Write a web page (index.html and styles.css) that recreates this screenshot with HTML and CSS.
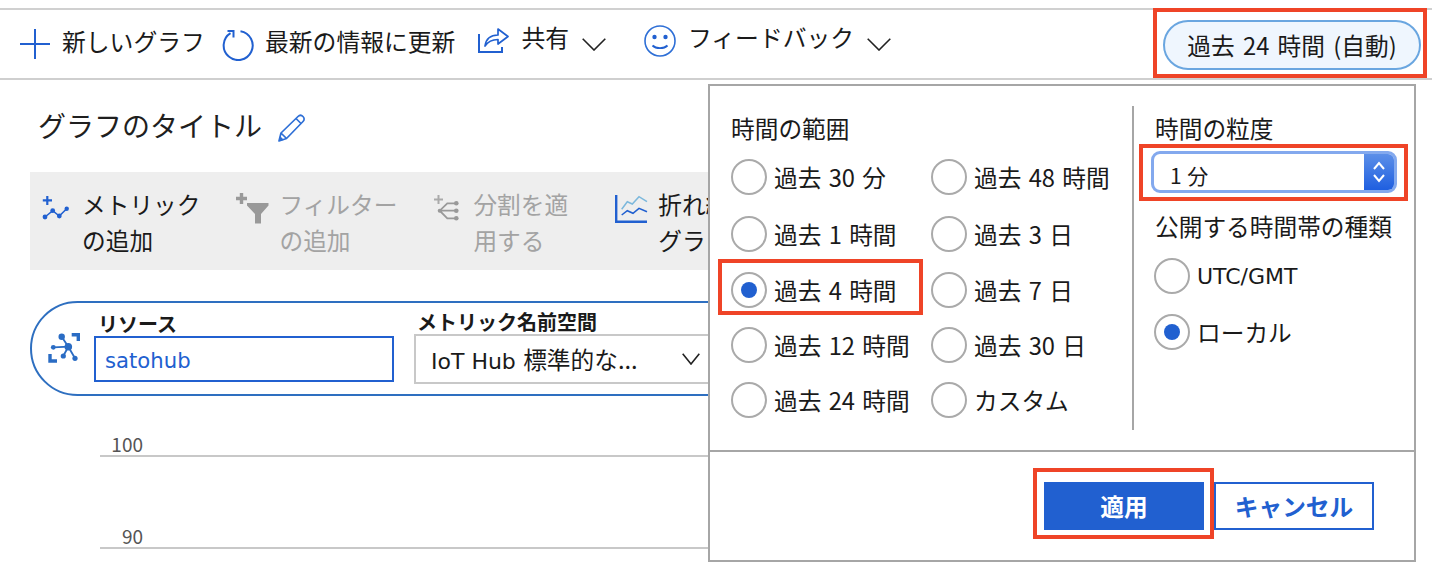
FILE: index.html
```html
<!DOCTYPE html>
<html lang="ja">
<head>
  <meta charset="UTF-8">
  <meta name="viewport" content="width=device-width, initial-scale=1.0">
  <title>メトリック</title>
  <link rel="stylesheet" href="styles.css">
</head>
<body>

<div class="toolbar">
  <div class="tb-item tb-new">
    <svg class="ic" width="30" height="30" viewBox="0 0 30 30"><path d="M0 15H30M15 0V30" fill="none" stroke="#2160d0" stroke-width="2"/></svg>
    <span>新しいグラフ</span>
  </div>
  <div class="tb-item tb-refresh">
    <svg class="ic" width="32" height="32" viewBox="0 0 32 32"><path d="M8.500 4.200A14.500 14.500 0 1 0 18.500 2.200M5.500 2H11.500V8.500" fill="none" stroke="#2160d0" stroke-width="2"/></svg>
    <span>最新の情報に更新</span>
  </div>
  <div class="tb-item tb-share">
    <svg class="ic" width="31" height="28" viewBox="0 0 31 28"><path d="M1 9V27H24V22" fill="none" stroke="#2160d0" stroke-width="2"/><path d="M7 21C8 14 12 10 20 10V4L30 11.500L20 19V14.500C14 14.500 10 16.500 7 21Z" fill="none" stroke="#2160d0" stroke-width="1.700" stroke-linejoin="round"/></svg>
    <span class="tb-up">共有</span>
    <svg class="chev" width="24" height="13" viewBox="0 0 24 13"><path d="M.7.7L12 12L23.300.7" fill="none" stroke="#222" stroke-width="1.600"/></svg>
  </div>
  <div class="tb-item tb-feedback">
    <svg class="ic" width="32" height="32" viewBox="0 0 32 32"><circle cx="16" cy="16" r="15" fill="none" stroke="#2e6fd6" stroke-width="1.600"/><circle cx="10.500" cy="12" r="2.200" fill="#2160d0"/><circle cx="21.500" cy="12" r="2.200" fill="#2160d0"/><path d="M8.500 20.500C12 24 20 24 23.500 20.500" fill="none" stroke="#2160d0" stroke-width="1.800"/></svg>
    <span class="tb-up">フィードバック</span>
    <svg class="chev" width="24" height="13" viewBox="0 0 24 13"><path d="M.7.7L12 12L23.300.7" fill="none" stroke="#222" stroke-width="1.600"/></svg>
  </div>
  <div class="time-pill">過去 24 時間 (自動)</div>
</div>

<div class="main">
  <div class="chart-title">
    <span>グラフのタイトル</span>
    <svg width="28" height="28" viewBox="0 0 28 28"><path d="M1 27L3 19L20 2.500C21.500 1 23.500 1 25 2.500C26.500 4 26.500 6 25 7.500L8.500 24.500ZM3 19L8.500 24.500M18 4.500L23.500 10" fill="none" stroke="#2e6fd6" stroke-width="1.700" stroke-linejoin="round"/><path d="M1 27L2 22L6 26Z" fill="#2e6fd6"/></svg>
  </div>

  <div class="strip">
    <div class="strip-item">
      <svg class="strip-ic ic-metric" width="27" height="24" viewBox="0 0 27 24"><path d="M5.300 0V9M.8 4.300H10" stroke="#2160d0" stroke-width="2.200"/><path d="M3 21L10.700 14.700L17.300 20L24.700 12.700" fill="none" stroke="#2160d0" stroke-width="1.600"/><circle cx="3" cy="21" r="2.400" fill="#2160d0"/><circle cx="10.700" cy="14.700" r="2.400" fill="#2160d0"/><circle cx="17.300" cy="20" r="2.400" fill="#2160d0"/><circle cx="24.700" cy="12.700" r="2.200" fill="#2160d0"/></svg>
      <span class="strip-text">メトリック<br>の追加</span>
    </div>
    <div class="strip-item off">
      <svg class="strip-ic ic-filter" width="33" height="31" viewBox="0 0 33 31"><path d="M5.500 0V11M0 5.500H11" stroke="#999" stroke-width="3.400"/><path d="M11 10H32.500V12.500L25 21V30.500H19V21L11 12.500Z" fill="#999"/></svg>
      <span class="strip-text">フィルター<br>の追加</span>
    </div>
    <div class="strip-item item-split off">
      <svg class="strip-ic ic-split" width="27" height="27" viewBox="0 0 27 27"><path d="M5.500 0V9M1 4.500H10" stroke="#aaa" stroke-width="2"/><path d="M23 8.300H14.300L6.700 15.700L14.300 23.300H23M6.700 15.700H23" fill="none" stroke="#999" stroke-width="1.800"/><circle cx="23.300" cy="8.300" r="2.300" fill="#999"/><circle cx="23.300" cy="15.700" r="2.300" fill="#999"/><circle cx="23.300" cy="23.300" r="2.300" fill="#999"/><circle cx="6.700" cy="15.700" r="2" fill="#999"/></svg>
      <span class="strip-text">分割を適<br>用する</span>
    </div>
    <div class="strip-item">
      <svg class="strip-ic ic-line" width="33" height="28" viewBox="0 0 33 28"><path d="M1.200 0V26.700H32" fill="none" stroke="#2160d0" stroke-width="2.400"/><path d="M6.700 14.300L12.300 6.700L17.300 9L24 1.700L32 6.700" fill="none" stroke="#7cb8dc" stroke-width="1.500"/><path d="M6.700 20L12.300 15.700L18 18.300L24 13.300L32 16.700" fill="none" stroke="#2160d0" stroke-width="1.500"/></svg>
      <span class="strip-text">折れ線<br>グラフ</span>
    </div>
  </div>

  <div class="resource-pill">
    <svg class="res-ic" width="32" height="31" viewBox="0 0 32 31"><path d="M23.700 1.700H30.300V8M2 21V28H9" fill="none" stroke="#2a6cc4" stroke-width="3.400"/><path d="M13.700 3.700L20.300 13.700L5.300 14.300M20.300 13.700L15.300 23M20.300 13.700L27 25.300" fill="none" stroke="#2a6cc4" stroke-width="1.800"/><circle cx="13.700" cy="3.700" r="3.200" fill="#2a6cc4"/><circle cx="20.300" cy="13.700" r="3.800" fill="#2a6cc4"/><circle cx="5.300" cy="14.300" r="2.400" fill="#2a6cc4"/><circle cx="15.300" cy="23" r="2.600" fill="#2a6cc4"/><circle cx="27" cy="25.300" r="2.600" fill="#2a6cc4"/></svg>
    <div class="field field-res">
      <label class="field-label">リソース</label>
      <div class="res-input">satohub</div>
    </div>
    <div class="field field-ns">
      <label class="field-label">メトリック名前空間</label>
      <div class="ns-select">
        <span><span class="latin">IoT Hub</span> 標準的な...</span>
        <svg width="18" height="12" viewBox="0 0 18 12"><path d="M.7.7L9 11L17.300.7" fill="none" stroke="#222" stroke-width="1.600"/></svg>
      </div>
    </div>
  </div>

  <div class="axis">
    <div class="axis-row"><span class="axis-num">100</span></div>
    <div class="axis-row"><span class="axis-num">90</span></div>
  </div>
</div>

<div class="time-panel">
  <div class="panel-body">
    <div class="range-col">
      <div class="panel-head">時間の範囲</div>
      <div class="radio-grid">
        <div class="radio"><i></i>過去 30 分</div>
        <div class="radio"><i></i>過去 48 時間</div>
        <div class="radio"><i></i>過去 1 時間</div>
        <div class="radio"><i></i>過去 3 日</div>
        <div class="radio marked"><i class="on"></i>過去 4 時間</div>
        <div class="radio"><i></i>過去 7 日</div>
        <div class="radio"><i></i>過去 12 時間</div>
        <div class="radio"><i></i>過去 30 日</div>
        <div class="radio"><i></i>過去 24 時間</div>
        <div class="radio"><i></i>カスタム</div>
      </div>
    </div>
    <div class="grain-col">
      <div class="panel-head">時間の粒度</div>
      <div class="grain-select">
        <span class="grain-val">1 分</span>
        <span class="grain-btn">
          <svg width="14" height="24" viewBox="0 0 14 24"><path d="M2 9L7 3L12 9M2 15L7 21L12 15" fill="none" stroke="#fff" stroke-width="2"/></svg>
        </span>
      </div>
      <div class="panel-head zone-head">公開する時間帯の種類</div>
      <div class="radio zone"><i></i><span class="latin latin-utc">UTC/GMT</span></div>
      <div class="radio zone"><i class="on"></i>ローカル</div>
    </div>
  </div>
  <div class="panel-foot">
    <button class="btn-apply">適用</button>
    <button class="btn-cancel">キャンセル</button>
  </div>
</div>

</body>
</html>
```

FILE: styles.css
```css
body {
  margin: 0;
  background-color: #fff;
  color: #1a1a1a;
  font-family: "Noto Sans CJK JP", sans-serif;
  font-size: 23.7px;
  word-spacing: 2px;
  overflow: hidden;
  height: 584px;
  position: relative;
}
svg {
  display: block;
  flex: none;
}
.latin {
  font-family: "DejaVu Sans", "Noto Sans CJK JP", sans-serif;
  font-size: 22px;
  word-spacing: 0;
}
.latin-utc {
  font-size: 22px;
}

/* top toolbar */
.toolbar {
  display: flex;
  align-items: center;
  height: 68px;
  margin-top: 8px;
  border-top: 2px solid #d0d0d0;
  border-bottom: 2px solid #cfcfcf;
  padding-left: 20px;
  font-size: 23.8px;
  position: relative;
}
.tb-item {
  display: flex;
  align-items: center;
  flex: none;
  height: 40px;
}
.tb-item span {
  line-height: 32px;
  white-space: nowrap;
}
.tb-new span,
.tb-refresh span {
  margin-top: -6px;
}
.tb-new .ic {
  margin-right: 12px;
}
.tb-new span {
  width: 142px;
}
.tb-refresh {
  margin-left: 18px;
}
.tb-refresh .ic {
  margin-right: 11px;
  margin-top: 2px;
}
.tb-share {
  margin-left: 23px;
}
.tb-share .ic {
  margin-right: 12px;
  margin-top: -11px;
}
.tb-feedback {
  margin-left: 38px;
}
.tb-feedback .ic {
  margin-right: 12px;
  margin-top: -7px;
}
.tb-item .tb-up {
  margin-top: -14px;
}
.chev {
  margin-left: 13px;
  margin-top: 1px;
}
.time-pill {
  position: absolute;
  left: 1163px;
  top: 10px;
  width: 258px;
  height: 50px;
  box-sizing: border-box;
  border: 2px solid #6aa6e0;
  border-radius: 25px;
  background-color: #eff6fe;
  font-size: 23.7px;
  word-spacing: 3px;
  line-height: 47px;
  text-align: center;
}
.time-pill::after {
  content: "";
  position: absolute;
  left: -12px;
  top: -14px;
  width: 274px;
  height: 70px;
  box-sizing: border-box;
  border: 4px solid #ef4427;
}

/* chart area under the toolbar */
.main {
  padding-left: 30px;
}
.chart-title {
  display: flex;
  align-items: center;
  gap: 16px;
  padding: 0 0 2px 8px;
  height: 90px;
  font-size: 28px;
  color: #1f1f1f;
}
.chart-title svg {
  margin-top: 5px;
}
.strip {
  display: flex;
  width: 800px;
  height: 98px;
  background-color: #eee;
  padding-left: 12px;
  box-sizing: border-box;
}
.strip-item {
  display: flex;
  flex: none;
  margin-right: 36px;
  padding-top: 14px;
}
.item-split {
  margin-right: 47px;
}
.strip-ic {
  margin-right: 13px;
}
.ic-metric {
  margin-top: 10px;
}
.ic-filter {
  margin: 7px 10px 0 0;
}
.ic-split {
  margin-top: 9px;
}
.ic-line {
  margin: 9px 10px 0 0;
}
.strip-text {
  line-height: 36px;
  white-space: nowrap;
}
.off {
  color: #a3a3a3;
}
.resource-pill {
  display: flex;
  width: 900px;
  height: 95px;
  box-sizing: border-box;
  margin-top: 31px;
  border: 2px solid #2e6fc0;
  border-radius: 48px;
  padding-left: 16px;
}
.res-ic {
  margin-top: 30px;
  margin-right: 14px;
}
.field-label {
  display: block;
  font-size: 20px;
  font-weight: 700;
  line-height: 24px;
}
.field-res {
  width: 300px;
  padding-top: 9px;
}
.field-res .field-label {
  padding-left: 4px;
}
.res-input {
  height: 46px;
  box-sizing: border-box;
  border: 2px solid #2160d0;
  padding-left: 9px;
  line-height: 45px;
  color: #2160d0;
  font-family: "DejaVu Sans", sans-serif;
  font-size: 21.2px;
}
.field-ns {
  width: 400px;
  margin-left: 20px;
  padding-top: 7px;
}
.field-ns .field-label {
  padding-left: 3px;
}
.ns-select {
  display: flex;
  align-items: center;
  justify-content: space-between;
  height: 50px;
  box-sizing: border-box;
  border: 2px solid #c8c8c8;
  padding: 0 112px 0 15px;
  font-size: 23.7px;
  white-space: nowrap;
}
.axis {
  margin-left: 70px;
  width: 800px;
}
.axis-row {
  height: 92px;
  box-sizing: border-box;
  border-bottom: 2px solid #c8c8c8;
  display: flex;
  align-items: flex-end;
  font-size: 19px;
  color: #555;
}
.axis-row:first-child {
  height: 61px;
}
.axis-num {
  width: 43px;
  text-align: right;
  line-height: 26px;
  margin-bottom: -2px;
}

/* time range popup */
.time-panel {
  position: absolute;
  left: 708px;
  top: 84px;
  width: 708px;
  height: 478px;
  box-sizing: border-box;
  border: 2px solid #a6a6a6;
  background-color: #fff;
}
.panel-body {
  display: flex;
  height: 364px;
  border-bottom: 2px solid #a6a6a6;
}
.range-col {
  width: 422px;
  padding: 26px 0 0 21px;
  box-sizing: border-box;
}
.panel-head {
  line-height: 32px;
  white-space: nowrap;
}
.radio-grid {
  display: grid;
  grid-template-columns: 200px 1fr;
  grid-template-rows: 56px 57px 55px 55px 56px;
  margin-top: 5px;
}
.radio {
  display: flex;
  align-items: center;
  gap: 7px;
  white-space: nowrap;
  position: relative;
}
.radio i {
  flex: none;
  width: 36px;
  height: 36px;
  box-sizing: border-box;
  border: 2px solid #aaa;
  border-radius: 50%;
  display: flex;
  align-items: center;
  justify-content: center;
}
.radio i.on::before {
  content: "";
  width: 16px;
  height: 16px;
  border-radius: 50%;
  background-color: #2160d0;
}
.marked::after {
  content: "";
  position: absolute;
  left: -13px;
  top: -3px;
  width: 205px;
  height: 56px;
  box-sizing: border-box;
  border: 4px solid #ef4427;
}
.grain-col {
  flex: 1;
  margin-top: 20px;
  height: 324px;
  box-sizing: border-box;
  border-left: 2px solid #a6a6a6;
  padding: 6px 0 0 21px;
}
.grain-select {
  display: flex;
  width: 246px;
  height: 42px;
  box-sizing: border-box;
  margin: 7px 0 0 -4px;
  border: 3px solid #83a9ee;
  border-radius: 9px;
  background-color: #fff;
  font-size: 21px;
  word-spacing: 1px;
  position: relative;
}
.grain-select::after {
  content: "";
  position: absolute;
  left: -15px;
  top: -10px;
  width: 269px;
  height: 57px;
  box-sizing: border-box;
  border: 4px solid #ef4427;
}
.grain-val {
  flex: 1;
  padding: 3px 0 0 16px;
  line-height: 36px;
}
.grain-btn {
  width: 30px;
  display: flex;
  align-items: center;
  justify-content: center;
  background: linear-gradient(#5c8fe8, #1f5fe0);
  border-radius: 0 6px 6px 0;
}
.zone-head {
  margin: 17px 0 6px;
}
.zone {
  height: 56px;
  margin-left: -1px;
}
.panel-foot {
  display: flex;
  gap: 10px;
  padding: 30px 0 0 334px;
}
.panel-foot button {
  width: 160px;
  height: 48px;
  box-sizing: border-box;
  font-family: inherit;
  font-size: 23.7px;
  font-weight: 700;
  padding: 0;
  position: relative;
}
.btn-apply {
  background-color: #2160d0;
  color: #fff;
  border: 0;
}
.btn-apply::after {
  content: "";
  position: absolute;
  left: -11px;
  top: -14px;
  width: 181px;
  height: 71px;
  box-sizing: border-box;
  border: 4px solid #ef4427;
}
.btn-cancel {
  background-color: #fff;
  color: #2160d0;
  border: 2px solid #2160d0;
}
```
